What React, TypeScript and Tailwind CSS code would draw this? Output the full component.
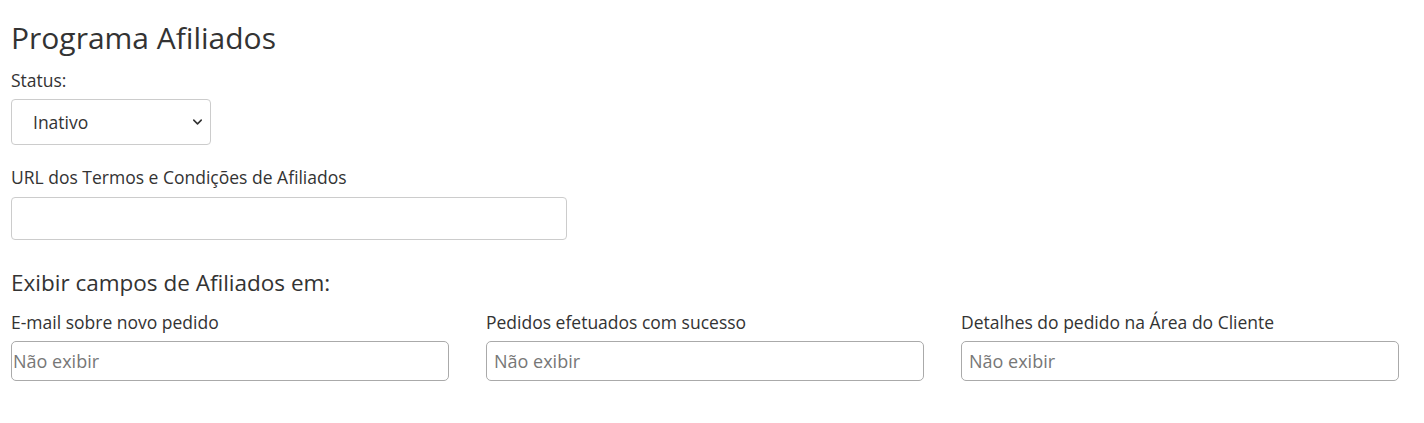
import { ChevronDown } from 'lucide-react';

const labelClass = "block text-[17.5px] leading-[24px] text-[#333]";
const smallInputClass = "w-full h-[40px] rounded-[5px] border border-[#aaa] bg-white px-[1px] text-[18px] text-[#555] placeholder:text-[#777] outline-none";

export default function App() {
  return (
    <div className="min-h-[423px] bg-white px-[11px] pt-[18px] font-['Open_Sans',sans-serif] text-[#333]">
      <h1 className="text-[30px] leading-[40px] font-normal text-[#333]">Programa Afiliados</h1>

      {/* Status */}
      <div className="mt-[10px]">
        <label className={labelClass}>Status:</label>
        <div className="relative mt-[7px] w-[200px]">
          <select className="w-full h-[46px] appearance-none rounded-[4px] border border-[#ccc] bg-white pl-[21px] pr-8 text-[17.5px] text-[#333] outline-none">
            <option>Inativo</option>
            <option>Ativo</option>
          </select>
          <ChevronDown className="pointer-events-none absolute right-[6px] top-1/2 -translate-y-1/2 text-[#333]" size={15} strokeWidth={2.5} />
        </div>
      </div>

      {/* URL termos */}
      <div className="mt-[20px]">
        <label className={labelClass}>URL dos Termos e Condições de Afiliados</label>
        <input type="text" className="mt-[8px] w-[556px] h-[43px] rounded-[4px] border border-[#ccc] bg-white px-3 text-[16px] outline-none" />
      </div>

      {/* Exibir campos */}
      <h2 className="mt-[28px] text-[22.5px] leading-[30px] font-normal text-[#333]">Exibir campos de Afiliados em:</h2>
      <div className="mt-[12px] grid grid-cols-3 gap-x-[37px] pr-[14px]">
        <div>
          <label className={labelClass}>E-mail sobre novo pedido</label>
          <input type="text" placeholder="Não exibir" className={`mt-[7px] ${smallInputClass}`} />
        </div>
        <div>
          <label className={labelClass}>Pedidos efetuados com sucesso</label>
          <input type="text" placeholder="Não exibir" className={`mt-[7px] ${smallInputClass} pl-[7px]`} />
        </div>
        <div>
          <label className={labelClass}>Detalhes do pedido na Área do Cliente</label>
          <input type="text" placeholder="Não exibir" className={`mt-[7px] ${smallInputClass} pl-[7px]`} />
        </div>
      </div>
    </div>
  );
}
